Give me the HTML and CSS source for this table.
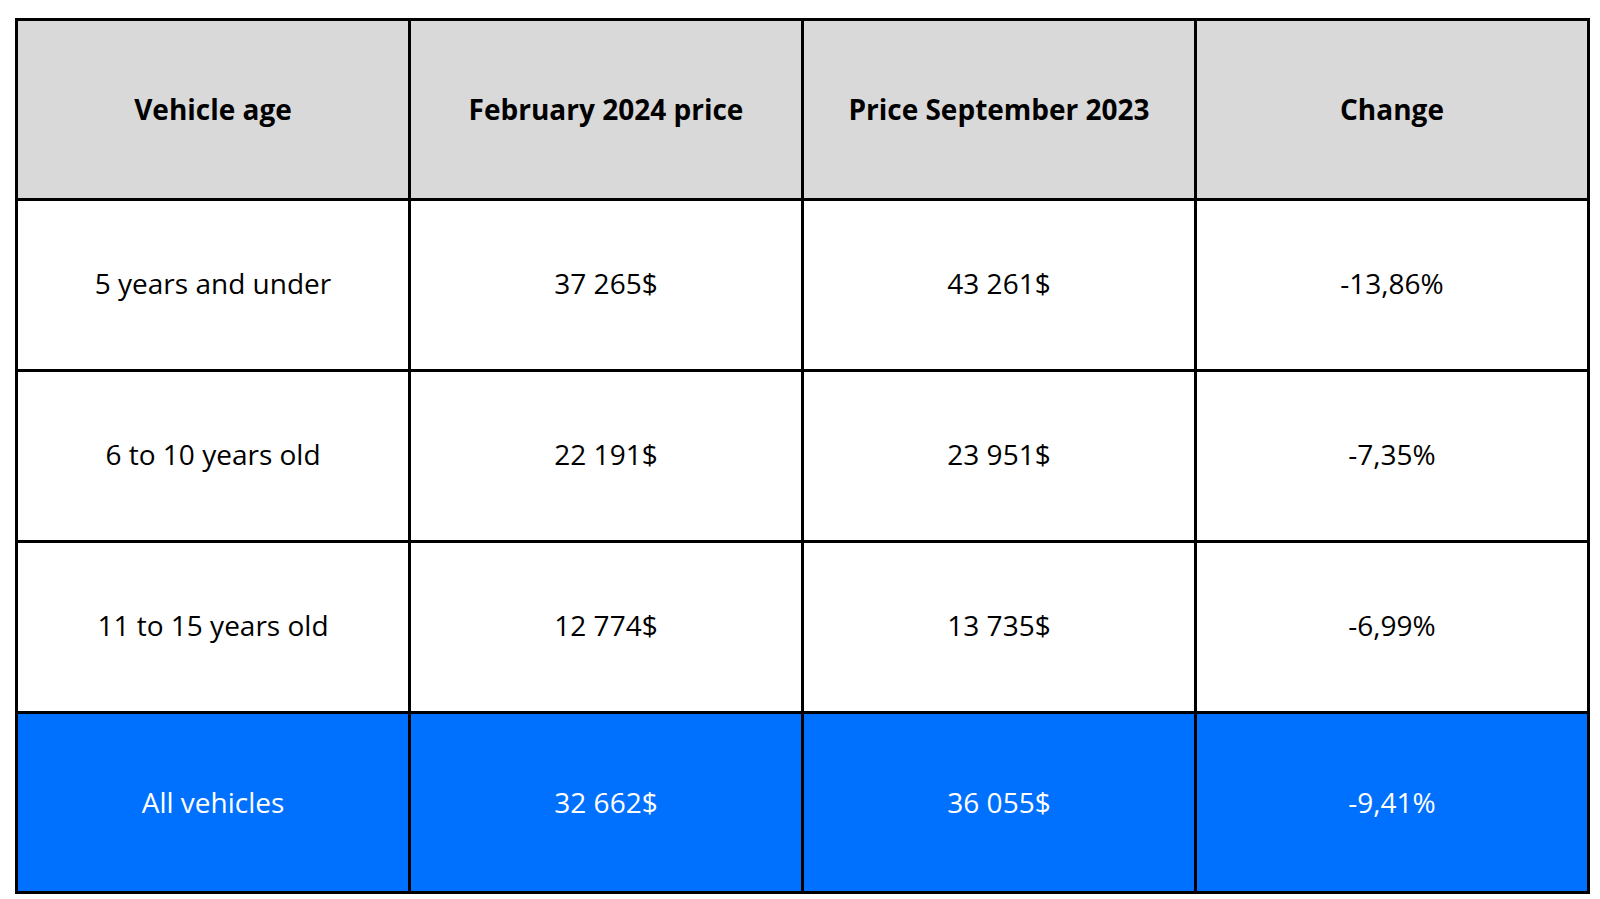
FILE: index.html
```html
<!DOCTYPE html>
<html>
<head>
<meta charset="utf-8">
<link rel="stylesheet" href="styles.css">
</head>
<body>
<table class="prices">
  <thead>
    <tr class="head-row">
      <th>Vehicle age</th>
      <th>February 2024 price</th>
      <th>Price September 2023</th>
      <th>Change</th>
    </tr>
  </thead>
  <tbody>
    <tr class="data-row">
      <td>5 years and under</td>
      <td>37 265$</td>
      <td>43 261$</td>
      <td>-13,86%</td>
    </tr>
    <tr class="data-row">
      <td>6 to 10 years old</td>
      <td>22 191$</td>
      <td>23 951$</td>
      <td>-7,35%</td>
    </tr>
    <tr class="data-row">
      <td>11 to 15 years old</td>
      <td>12 774$</td>
      <td>13 735$</td>
      <td>-6,99%</td>
    </tr>
    <tr class="total-row">
      <td>All vehicles</td>
      <td>32 662$</td>
      <td>36 055$</td>
      <td>-9,41%</td>
    </tr>
  </tbody>
</table>
</body>
</html>
```

FILE: styles.css
```css
html, body {
  margin: 0;
  padding: 0;
  background: #ffffff;
}

body {
  padding: 18px 0 0 15px;
  font-family: "Open Sans", "Liberation Sans", sans-serif;
}

.prices {
  border-collapse: separate;
  border-spacing: 0;
  width: 1575px;
  table-layout: fixed;
  border-top: 3px solid #000;
  border-left: 3px solid #000;
}

.prices th,
.prices td {
  border-right: 3px solid #000;
  border-bottom: 3px solid #000;
  text-align: center;
  vertical-align: middle;
  padding: 0;
  font-size: 28px;
  line-height: 1.3;
  color: #000;
}

.prices th {
  font-weight: 700;
}

.head-row th {
  background: #d9d9d9;
  height: 177px;
}

.data-row td {
  height: 171px;
  padding-bottom: 3px;
  box-sizing: border-box;
  font-weight: 400;
}

.total-row td {
  background: #0070ff;
  color: #ffffff;
  height: 177px;
}
```
